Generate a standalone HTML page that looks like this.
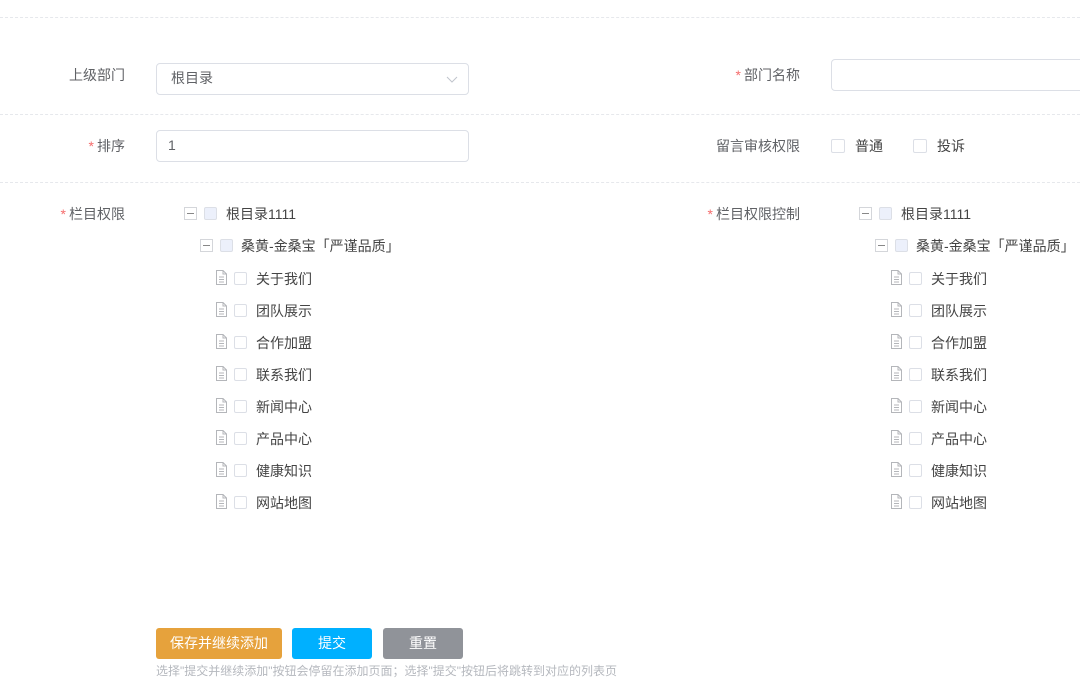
<!DOCTYPE html>
<html><head><meta charset="utf-8"><style>
*{margin:0;padding:0;box-sizing:border-box}
body{width:1080px;height:698px;overflow:hidden;background:#fff;font-family:"Liberation Sans","Noto Sans CJK SC",sans-serif;font-size:14px;color:#606266;position:relative}
.a{position:absolute}
.dash{position:absolute;left:0;width:1080px;border-top:1px dashed #e6e8ec}
.lbl{position:absolute;text-align:right;line-height:20px;color:#606266}
.lbl b{color:#f56c6c;font-weight:normal;margin-right:3px}
.box{position:absolute;border:1px solid #dcdfe6;border-radius:4px;background:#fff;line-height:29px;padding-left:14px;color:#606266}
.cb{position:absolute;width:13px;height:13px;border:1px solid #dcdfe6;border-radius:2px;background:#fff}
.cb.h{background:#ecf0fb}
.mn{position:absolute;width:13px;height:13px;border:1px solid #d4d6da;background:#fff}
.mn:after{content:"";position:absolute;left:2px;right:2px;top:5px;height:1px;background:#888}
.t{position:absolute;line-height:16px;color:#444;white-space:nowrap}
.btn{position:absolute;height:31px;top:628px;border-radius:3px;color:#fff;text-align:center;line-height:31px;font-size:14px}
</style></head><body>
<div class="dash" style="top:17px"></div>
<div class="dash" style="top:114px"></div>
<div class="dash" style="top:182px"></div>

<div class="lbl" style="left:40px;width:85px;top:65px">上级部门</div>
<div class="box" style="left:156px;top:63px;width:313px;height:32px">根目录
<svg class="a" style="right:10px;top:10px" width="12" height="10"><path d="M1 3 L6 8 L11 3" fill="none" stroke="#c0c4cc" stroke-width="1"/></svg></div>
<div class="lbl" style="left:40px;width:85px;top:136px"><b>*</b>排序</div>
<div class="box" style="left:156px;top:130px;width:313px;height:32px;padding-left:11px">1</div>
<div class="lbl" style="left:40px;width:85px;top:204px"><b>*</b>栏目权限</div>

<div class="lbl" style="left:680px;width:120px;top:65px"><b>*</b>部门名称</div>
<div class="box" style="left:831px;top:59px;width:260px;height:32px"></div>
<div class="lbl" style="left:680px;width:120px;top:136px">留言审核权限</div>
<div class="cb" style="left:831px;top:139px;width:14px;height:14px"></div>
<div class="t" style="left:855px;top:138px">普通</div>
<div class="cb" style="left:913px;top:139px;width:14px;height:14px"></div>
<div class="t" style="left:937px;top:138px">投诉</div>
<div class="lbl" style="left:680px;width:120px;top:204px"><b>*</b>栏目权限控制</div>

<div id="tree"></div>

<div class="btn" style="left:156px;width:126px;background:#e6a23c">保存并继续添加</div>
<div class="btn" style="left:292px;width:80px;background:#00b0ff">提交</div>
<div class="btn" style="left:383px;width:80px;background:#909399">重置</div>
<div class="a" style="left:156px;top:663px;font-size:12px;color:#b5b8be;line-height:16px">选择"提交并继续添加"按钮会停留在添加页面；选择"提交"按钮后将跳转到对应的列表页</div>

<script>
var items=["关于我们","团队展示","合作加盟","联系我们","新闻中心","产品中心","健康知识","网站地图"];
var h="";
[0,675].forEach(function(o){
h+='<div class="mn" style="left:'+(184+o)+'px;top:207px"></div><div class="cb h" style="left:'+(204+o)+'px;top:207px"></div><div class="t" style="left:'+(226+o)+'px;top:206px">根目录1111</div>';
h+='<div class="mn" style="left:'+(200+o)+'px;top:239px"></div><div class="cb h" style="left:'+(220+o)+'px;top:239px"></div><div class="t" style="left:'+(241+o)+'px;top:238px">桑黄-金桑宝「严谨品质」</div>';
items.forEach(function(s,i){var y=270+32*i;
h+='<svg class="a" style="left:'+(215+o)+'px;top:'+y+'px" width="13" height="15"><path d="M1.5 0.5 H8 L11.5 4 V14.5 H1.5 Z M8 0.5 V4 H11.5 M4 7 H9 M4 9.5 H9 M4 12 H9" fill="none" stroke="#b4b6ba" stroke-width="1"/></svg>';
h+='<div class="cb" style="left:'+(234+o)+'px;top:'+(y+2)+'px"></div><div class="t" style="left:'+(256+o)+'px;top:'+(y+1)+'px">'+s+'</div>';});
});
document.getElementById("tree").innerHTML=h;
</script>
</body></html>
